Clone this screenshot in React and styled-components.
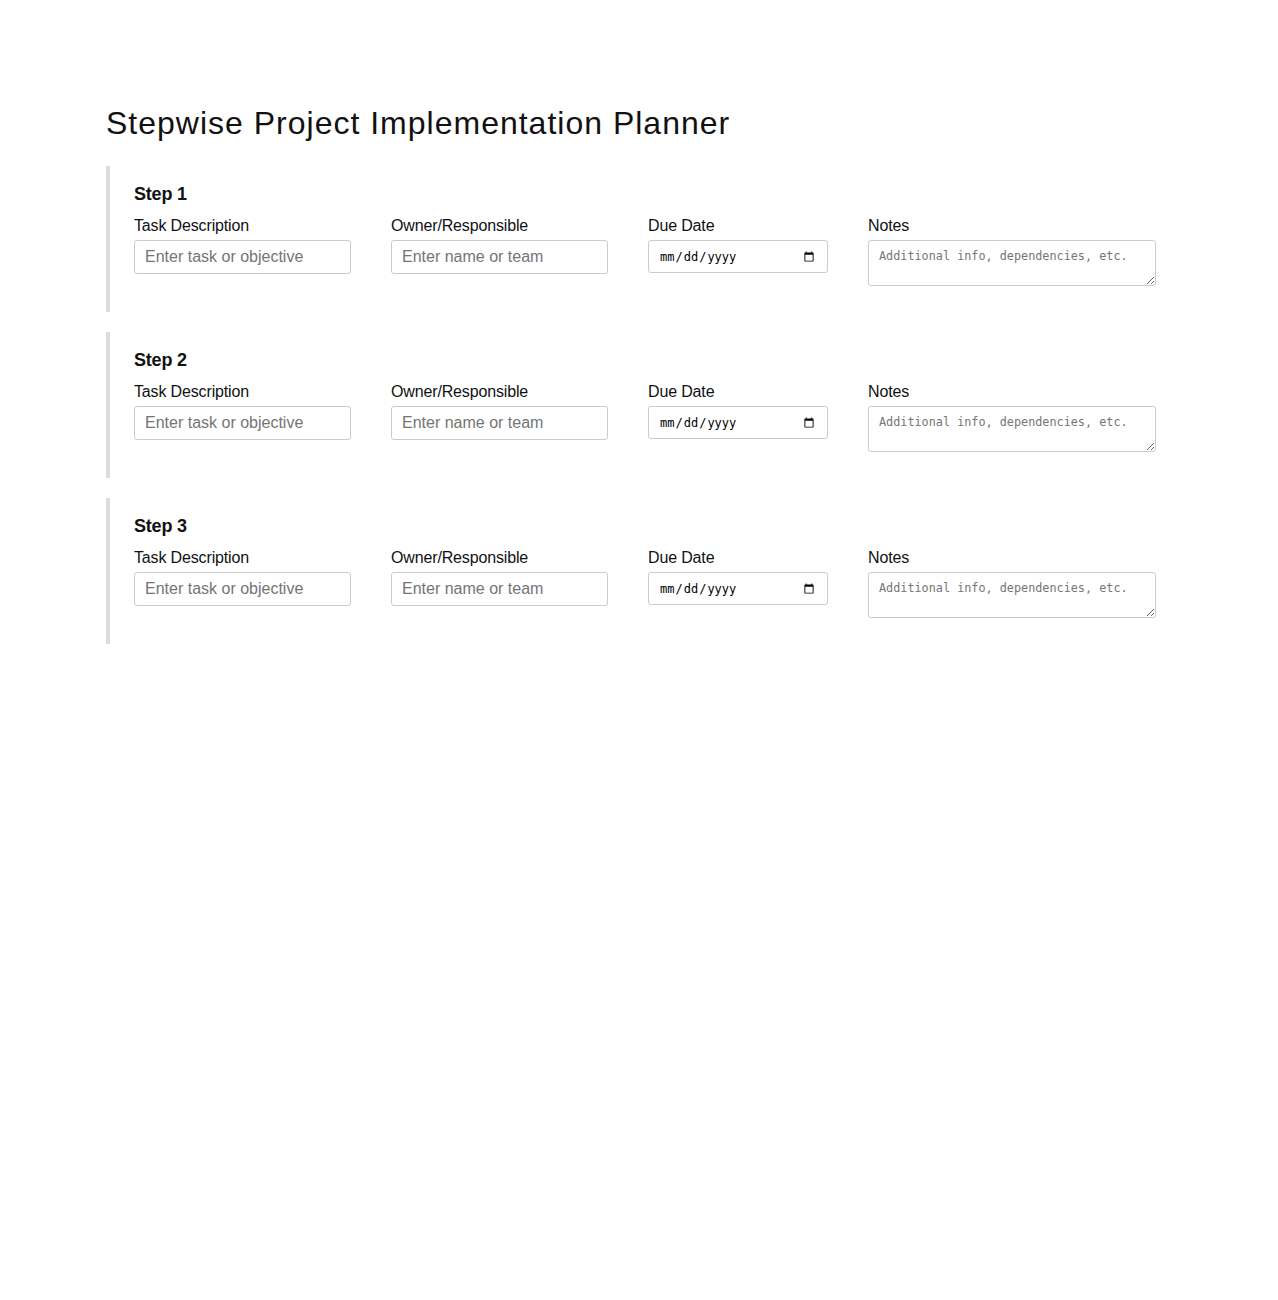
import React from 'react';
import styled, { createGlobalStyle } from 'styled-components';

const GlobalStyle = createGlobalStyle`
    body {
        margin: 0;
        background: #fff;
        font-family: "Liberation Sans", Arial, sans-serif;
        color: #111;
    }
`

const Page = styled.div`
    max-width: 1066px;
    margin: 0 auto;
    padding-top: 105px;
`

const Title = styled.h1`
    margin: 0 0 24px;
    font-size: 32px;
    font-weight: 400;
    line-height: 37px;
    letter-spacing: 1px;
`

const StepBlock = styled.section`
    border-left: 4px solid #ddd;
    padding: 18px 16px 26px 24px;
    margin-bottom: 20px;
`

const StepTitle = styled.h3`
    margin: 0 0 12px;
    font-size: 18px;
    font-weight: 700;
    line-height: 21px;
    letter-spacing: -0.2px;
`

const Row = styled.div`
    display: flex;
    gap: 40px;
    align-items: flex-start;
`

const Field = styled.div`
    width: ${(p) => p.$width}px;
    display: flex;
    flex-direction: column;
`

const Label = styled.label`
    font-size: 16px;
    line-height: 18px;
    margin-bottom: 5px;
    letter-spacing: -0.15px;
`

const TextInput = styled.input`
    box-sizing: border-box;
    width: 100%;
    height: 34px;
    padding: 0 10px;
    border: 1px solid #ccc;
    border-radius: 3px;
    font-family: "Liberation Sans", Arial, sans-serif;
    font-size: 16px;
    &::placeholder { color: #757575; }
`

const DateInput = styled.input`
    box-sizing: border-box;
    width: 100%;
    height: 33px;
    padding: 0 10px;
    border: 1px solid #ccc;
    border-radius: 3px;
    font-family: "DejaVu Sans Mono", monospace;
    font-size: 12px;
`

const Notes = styled.textarea`
    box-sizing: border-box;
    display: block;
    width: 100%;
    height: 46px;
    padding: 8px 10px;
    border: 1px solid #ccc;
    border-radius: 3px;
    font-family: "DejaVu Sans Mono", monospace;
    font-size: 11.8px;
`

const steps = [1, 2, 3];

const Step = ({ n }) => (
    <StepBlock>
        <StepTitle>Step {n}</StepTitle>
        <Row>
            <Field $width={217}>
                <Label>Task Description</Label>
                <TextInput type="text" placeholder="Enter task or objective" />
            </Field>
            <Field $width={217}>
                <Label>Owner/Responsible</Label>
                <TextInput type="text" placeholder="Enter name or team" />
            </Field>
            <Field $width={180}>
                <Label>Due Date</Label>
                <DateInput type="date" />
            </Field>
            <Field $width={288}>
                <Label>Notes</Label>
                <Notes placeholder="Additional info, dependencies, etc." />
            </Field>
        </Row>
    </StepBlock>
);

const App = () => (
    <Page>
        <GlobalStyle />
        <Title>Stepwise Project Implementation Planner</Title>
        {steps.map((n) => <Step key={n} n={n} />)}
    </Page>
);

export default App;
